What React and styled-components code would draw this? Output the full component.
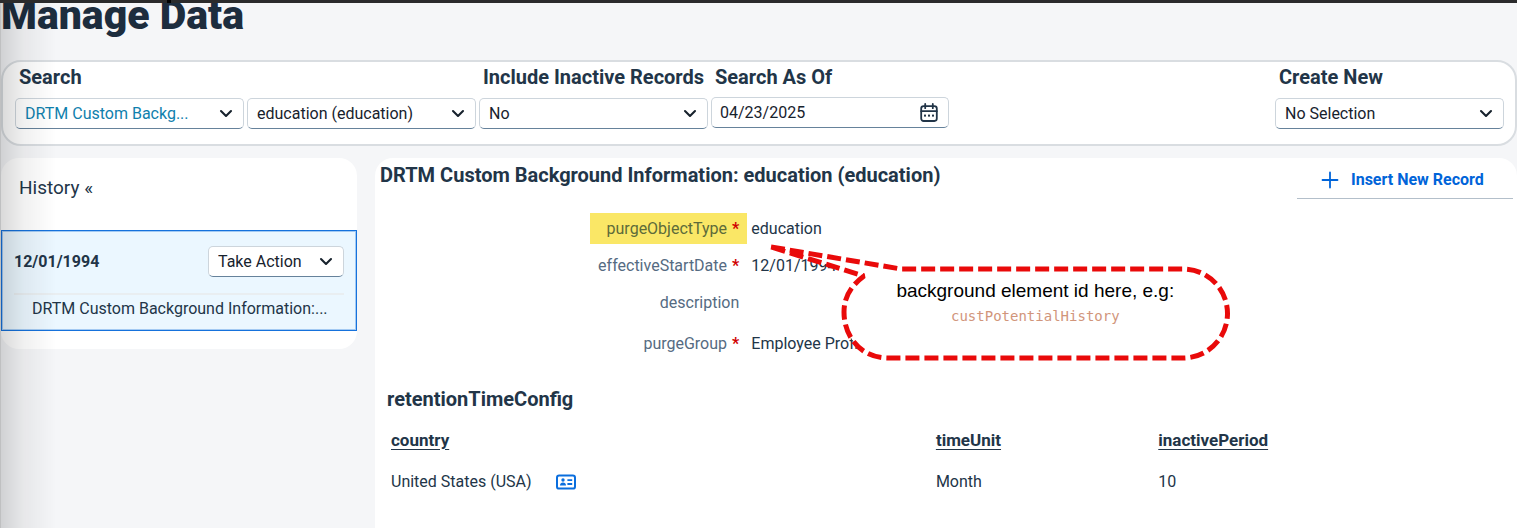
import React from "react";
import styled, { createGlobalStyle } from "styled-components";

const GlobalStyle = createGlobalStyle`
  * {
    box-sizing: border-box;
  }

  body {
    margin: 0;
    background-color: #f5f6f8;
    color: #223548;
    font-family: Roboto, "Liberation Sans", sans-serif;
    font-size: 16px;
    line-height: 20px;
  }

  button, select, input {
    font: inherit;
    color: inherit;
  }
`;

const Page = styled.div`
  position: relative;
  min-height: 100vh;
  display: flex;
  flex-direction: column;
  padding-left: 1px;
`;

const TopStrip = styled.div`
  position: absolute;
  top: 0;
  left: 0;
  right: 0;
  height: 3px;
  background: linear-gradient(#000, #000) 167px 0 / 4px 3px no-repeat #2b2b2c;
`;

const EdgeShadow = styled.div`
  position: absolute;
  top: 3px;
  bottom: 0;
  left: 0;
  width: 56px;
  border-left: 1px solid rgba(0, 0, 0, 0.22);
  background: linear-gradient(
    to right,
    rgba(0, 0, 0, 0.15),
    rgba(0, 0, 0, 0.06) 40%,
    rgba(0, 0, 0, 0)
  );
  pointer-events: none;
`;

const Title = styled.h1`
  margin: 0 0 30px;
  font-size: 41px;
  line-height: 30px;
  font-weight: 900;
  color: #1d2d3e;
`;

const Toolbar = styled.form`
  display: flex;
  gap: 3px;
  height: 86px;
  padding: 5px 11px 0 12px;
  border: 2px solid #d9dde1;
  border-radius: 20px;
  background-color: #fff;
`;

const Group = styled.div`
  display: flex;
  flex-direction: column;
  gap: ${(props) => (props.$tight ? 10 : 11)}px;
  margin-left: ${(props) => (props.$end ? "auto" : 0)};
`;

const GroupLabel = styled.label`
  padding-left: 4px;
  font-size: 20px;
  line-height: 20px;
  font-weight: 700;
  white-space: nowrap;
`;

const Controls = styled.div`
  display: flex;
  gap: 3px;
`;

const SelectBox = styled.span`
  position: relative;
  display: block;
  width: ${(props) => props.$width}px;

  svg {
    position: absolute;
    top: 11px;
    right: 11px;
    pointer-events: none;
  }
`;

const Select = styled.select`
  display: block;
  width: 100%;
  height: 31px;
  padding: 0 32px 0 9px;
  appearance: none;
  border: 1px solid #cdd5dc;
  border-bottom-color: #66829b;
  border-radius: 5px;
  background-color: #fff;
  color: ${(props) => (props.$accent ? "#0f80ad" : "#17222d")};
`;

const DateBox = styled.span`
  display: flex;
  align-items: center;
  width: 238px;
  height: 31px;
  padding: 0 10px 0 8px;
  border: 1px solid #cdd5dc;
  border-bottom-color: #66829b;
  border-radius: 5px;
  background-color: #fff;
`;

const DateInput = styled.input`
  flex: 1;
  min-width: 0;
  padding: 0;
  border: 0;
  outline: 0;
  background: none;
  color: #17222d;
`;

const IconButton = styled.button`
  display: flex;
  padding: 0;
  border: 0;
  background: none;
  cursor: pointer;
`;

const Columns = styled.div`
  flex: 1;
  display: grid;
  grid-template-columns: 356px minmax(0, 1fr);
  align-items: stretch;
  gap: 18px;
  margin-top: 12px;
`;

const History = styled.aside`
  align-self: start;
  padding-bottom: 18px;
  border-radius: 18px;
  background-color: #fff;
`;

const HistoryHeading = styled.h2`
  margin: 0;
  padding: 20px 18px 32px;
  font-size: 19px;
  line-height: 20px;
  font-weight: 400;
`;

const HistoryItem = styled.div`
  padding: 15px 12px 11px;
  border: 1px solid #1672dc;
  outline: 1px solid #1672dc55;
  outline-offset: -2px;
  background-color: #ebf7ff;
`;

const HistoryRow = styled.div`
  display: flex;
  justify-content: space-between;
  align-items: center;
  padding-bottom: 16px;
  border-bottom: 2px solid #e9eef1;
`;

const HistorySummary = styled.div`
  padding: 4px 0 0 18px;
  white-space: nowrap;
`;

const Details = styled.main`
  min-width: 0;
  padding: 7px 4px 0 12px;
  border-radius: 18px 18px 0 0;
  background-color: #fff;
`;

const DetailsHeader = styled.div`
  display: flex;
  justify-content: space-between;
  align-items: flex-start;
  height: 48px;
  margin-left: -7px;
`;

const Heading = styled.h2`
  margin: 0;
  font-size: 20px;
  line-height: 20px;
  font-weight: 700;
`;

const InsertButton = styled.button`
  display: flex;
  align-items: center;
  gap: 12px;
  width: 216px;
  height: 34px;
  padding: 0 24px 4px;
  border: 0;
  border-bottom: 1px solid #b3bfca;
  background: none;
  color: #0064d9;
  font-weight: 700;
  white-space: nowrap;
  cursor: pointer;
`;

const Fields = styled.dl`
  position: relative;
  display: grid;
  grid-template-columns: 32% 1fr;
  grid-template-rows: 31px 31px 35px 31px;
  row-gap: 6px;
  margin: 0;
`;

const FieldName = styled.dt`
  justify-self: end;
  padding: 6px 8px 5px 17px;
  line-height: 20px;
  color: ${(props) => (props.$marked ? "#5d6b3a" : "#556b82")};
  background-color: ${(props) => (props.$marked ? "#fae766" : "transparent")};
`;

const FieldValue = styled.dd`
  margin: 0;
  padding: 6px 4px 5px;
  line-height: 20px;
`;

const Required = styled.span`
  margin-left: 5px;
  color: #d00000;
  font-weight: 700;
`;

const Callout = styled.div`
  position: absolute;
  top: 27px;
  left: calc(32% + 20px);
  width: 472px;
  height: 124px;
`;

const CalloutShape = styled.svg`
  position: absolute;
  inset: 0;
`;

const CalloutText = styled.p`
  position: relative;
  margin: 0;
  padding: 41px 22px 0 86px;
  text-align: center;
  color: #000;
  font-family: "Liberation Sans", sans-serif;
  font-size: 19px;
  line-height: 20px;
`;

const Code = styled.code`
  display: block;
  margin-top: 5px;
  color: #d1957b;
  font-family: "DejaVu Sans Mono", monospace;
  font-size: 14px;
`;

const SubHeading = styled.h3`
  margin: 30px 0 10px;
  font-size: 20px;
  line-height: 20px;
  font-weight: 700;
`;

const Table = styled.table`
  width: calc(100% - 14px);
  table-layout: fixed;
  border-collapse: collapse;

  th, td {
    height: 42px;
    padding: 0 4px;
    text-align: left;
  }

  th {
    font-size: 17px;
    font-weight: 700;
    text-decoration: underline;
    text-underline-offset: 3px;
  }
`;

const CellContent = styled.span`
  display: flex;
  align-items: center;
  gap: 24px;
`;

function ChevronIcon() {
  return (
    <svg width="14" height="10" viewBox="0 0 14 10" fill="none" aria-hidden="true">
      <path
        d="M2 2l5 5 5-5"
        stroke="#17222d"
        strokeWidth="2.1"
        strokeLinecap="round"
        strokeLinejoin="round"
      />
    </svg>
  );
}

function CalendarIcon() {
  return (
    <svg width="18" height="20" viewBox="0 0 18 20" fill="none" aria-hidden="true">
      <g stroke="#223548" strokeWidth="1.8" strokeLinecap="round">
        <rect x="1.2" y="3.2" width="15.6" height="14.8" rx="2.4" />
        <path d="M1.2 8.2h15.6M5.2 1v4.2M12.8 1v4.2" />
      </g>
      <g fill="#223548">
        <rect x="4" y="11.6" width="2" height="2" />
        <rect x="8" y="11.6" width="2" height="2" />
        <rect x="12" y="11.6" width="2" height="2" />
      </g>
    </svg>
  );
}

function PlusIcon() {
  return (
    <svg width="18" height="18" viewBox="0 0 18 18" aria-hidden="true">
      <path
        d="M9 1.5v15M1.5 9h15"
        stroke="#0064d9"
        strokeWidth="1.8"
        strokeLinecap="round"
      />
    </svg>
  );
}

function CardIcon() {
  return (
    <svg width="20" height="16" viewBox="0 0 20 16" fill="none" aria-hidden="true">
      <rect x="1" y="1.6" width="18" height="13" rx="2.2" stroke="#0a6ede" strokeWidth="2" />
      <circle cx="7" cy="6" r="1.7" fill="#0a6ede" />
      <path d="M4 11.6c0-2 1.2-3 3-3s3 1 3 3z" fill="#0a6ede" />
      <path d="M11.4 6.2h4.8M11.4 10h4.8" stroke="#0a6ede" strokeWidth="1.8" />
    </svg>
  );
}

function SelectField({ id, label, value, width, accent }) {
  return (
    <SelectBox $width={width}>
      <Select id={id} aria-label={label} $accent={accent} defaultValue={value}>
        <option>{value}</option>
      </Select>
      <ChevronIcon />
    </SelectBox>
  );
}

const fields = [
  { name: "purgeObjectType", value: "education", required: true, marked: true },
  { name: "effectiveStartDate", value: "12/01/1994", required: true },
  { name: "description", value: "" },
  { name: "purgeGroup", value: "Employee Profile", required: true },
];

export default function App() {
  return (
    <Page>
      <GlobalStyle />
      <Title>Manage Data</Title>

      <Toolbar>
        <Group>
          <GroupLabel htmlFor="search">Search</GroupLabel>
          <Controls>
            <SelectField id="search" value="DRTM Custom Backg..." width={229} accent />
            <SelectField id="record" label="Record" value="education (education)" width={229} />
          </Controls>
        </Group>
        <Group>
          <GroupLabel htmlFor="inactive">Include Inactive Records</GroupLabel>
          <SelectField id="inactive" value="No" width={229} />
        </Group>
        <Group $tight>
          <GroupLabel htmlFor="asOf">Search As Of</GroupLabel>
          <DateBox>
            <DateInput id="asOf" defaultValue="04/23/2025" />
            <IconButton type="button" aria-label="Open calendar">
              <CalendarIcon />
            </IconButton>
          </DateBox>
        </Group>
        <Group $end>
          <GroupLabel htmlFor="create">Create New</GroupLabel>
          <SelectField id="create" value="No Selection" width={229} />
        </Group>
      </Toolbar>

      <Columns>
        <History>
          <HistoryHeading>History «</HistoryHeading>
          <HistoryItem>
            <HistoryRow>
              <strong>12/01/1994</strong>
              <SelectField id="action" label="Action" value="Take Action" width={136} />
            </HistoryRow>
            <HistorySummary>DRTM Custom Background Information:...</HistorySummary>
          </HistoryItem>
        </History>

        <Details>
          <DetailsHeader>
            <Heading>DRTM Custom Background Information: education (education)</Heading>
            <InsertButton type="button">
              <PlusIcon />
              Insert New Record
            </InsertButton>
          </DetailsHeader>

          <Fields>
            {fields.map((field) => (
              <React.Fragment key={field.name}>
                <FieldName $marked={field.marked}>
                  {field.name}
                  {field.required && <Required>*</Required>}
                </FieldName>
                <FieldValue>{field.value}</FieldValue>
              </React.Fragment>
            ))}
            <Callout>
              <CalloutShape width="472" height="124" viewBox="0 0 472 124">
                <path
                  d="M4 7L134 29H416A44 44 0 0 1 416 118H121C94 118 77 97 77 72C77 56 85 45 97 36Z"
                  fill="#fff"
                  stroke="#e90a0a"
                  strokeWidth="5"
                  strokeLinejoin="bevel"
                  strokeDasharray="14 5"
                />
              </CalloutShape>
              <CalloutText>
                background element id here, e.g:
                <Code>custPotentialHistory</Code>
              </CalloutText>
            </Callout>
          </Fields>

          <SubHeading>retentionTimeConfig</SubHeading>
          <Table>
            <colgroup>
              <col width="49%" />
              <col width="20%" />
              <col />
            </colgroup>
            <thead>
              <tr>
                <th>country</th>
                <th>timeUnit</th>
                <th>inactivePeriod</th>
              </tr>
            </thead>
            <tbody>
              <tr>
                <td>
                  <CellContent>
                    United States (USA)
                    <IconButton type="button" aria-label="Show country details">
                      <CardIcon />
                    </IconButton>
                  </CellContent>
                </td>
                <td>Month</td>
                <td>10</td>
              </tr>
            </tbody>
          </Table>
        </Details>
      </Columns>

      <EdgeShadow />
      <TopStrip />
    </Page>
  );
}
